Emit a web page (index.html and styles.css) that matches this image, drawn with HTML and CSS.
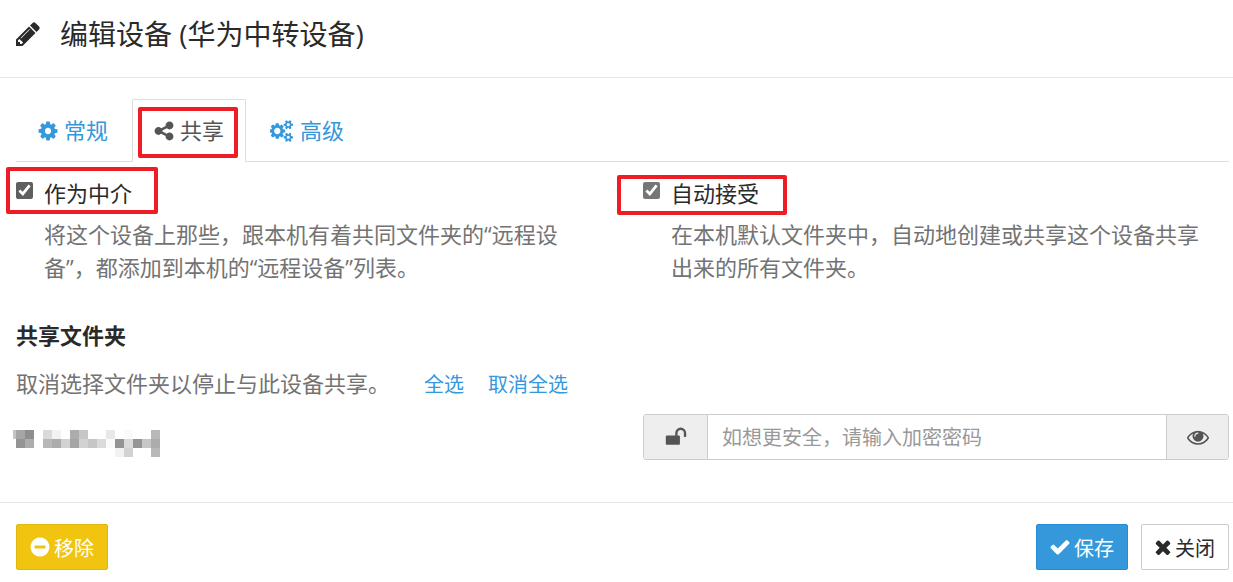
FILE: index.html
```html
<!doctype html>
<html lang="zh-CN">
<head>
<meta charset="utf-8">
<title>编辑设备</title>
<link rel="stylesheet" href="styles.css">
</head>

<body>
<form class="modal">
	<div class="modal-header">
		<svg class="icon-pencil" viewBox="128 0 1536 1792"><path d="M491 1536l91-91-235-235-91 91v107h128v128h107zm523-928q0-22-22-22-10 0-17 7l-542 542q-7 7-7 17 0 22 22 22 10 0 17-7l542-542q7-7 7-17zm-54-192l416 416-832 832h-416v-416zm683 96q0 53-37 90l-166 166-416-416 166-165q36-38 90-38 53 0 91 38l235 234q37 39 37 91z"/></svg>
		<h4 class="modal-title">编辑设备 (华为中转设备)</h4>
	</div>

	<div class="modal-body">
		<ul class="tabs">
			<li><a href="#general">
				<svg class="icon" viewBox="128 0 1536 1792"><path d="M1152 896q0-106-75-181t-181-75-181 75-75 181 75 181 181 75 181-75 75-181zm512-109v222q0 12-8 23t-20 13l-185 28q-19 54-39 91 35 50 107 138 10 12 10 25t-9 23q-27 37-99 108t-94 71q-12 0-26-9l-138-108q-44 23-91 38-16 136-29 186-7 28-36 28h-222q-14 0-24.5-8.5t-11.5-21.5l-28-184q-49-16-90-37l-141 107q-10 9-25 9-14 0-25-11-126-114-165-168-7-10-7-23 0-12 8-23 15-21 51-66.5t54-70.5q-27-50-41-99l-183-27q-13-2-21-12.5t-8-23.5v-222q0-12 8-23t19-13l186-28q14-46 39-92-40-57-107-138-10-12-10-24 0-10 9-23 26-36 98.5-107.5t94.5-71.5q13 0 26 10l138 107q44-23 91-38 16-136 29-186 7-28 36-28h222q14 0 24.5 8.5t11.5 21.5l28 184q49 16 90 37l142-107q9-9 24-9 13 0 25 10 129 119 165 170 7 8 7 22 0 12-8 23-15 21-51 66.5t-54 70.5q26 50 41 98l183 28q13 2 21 12.5t8 23.5z"/></svg>
				<span>常规</span>
			</a></li>
			<li class="active"><a href="#sharing">
				<svg class="icon" viewBox="128 0 1536 1792"><path d="M1344 1024q133 0 226.500 93.500t93.500 226.500-93.500 226.500-226.500 93.500-226.500-93.500-93.500-226.500q0-12 2-34l-360-180q-92 86-218 86-133 0-226.500-93.500t-93.500-226.500 93.500-226.500 226.500-93.500q126 0 218 86l360-180q-2-22-2-34 0-133 93.500-226.500t226.500-93.500 226.500 93.500 93.500 226.500-93.500 226.500-226.500 93.500q-126 0-218-86l-360 180q2 22 2 34t-2 34l360 180q92-86 218-86z"/></svg>
				<span>共享</span>
			</a><i class="mark mark-tab"></i></li>
			<li><a href="#advanced">
				<svg class="icon icon-cogs" viewBox="0 0 1920 1792"><path d="M832 896q0-106-75-181t-181-75-181 75-75 181 75 181 181 75 181-75 75-181zm384-91v185q0 10-7 19.500t-16 10.500l-155 24q-11 35-32 76 34 48 90 115 7 11 7 20 0 12-7 19-23 30-82.500 89.500t-78.500 59.500q-11 0-21-7l-115-90q-37 19-77 31-11 108-23 155-7 24-30 24h-186q-11 0-20-7.500t-10-17.500l-23-153q-34-10-75-31l-118 89q-7 7-20 7-11 0-21-8-144-133-144-160 0-9 7-19 10-14 41-53t47-61q-23-44-35-82l-152-24q-10-1-17-9.500t-7-19.500v-185q0-10 7-19.500t16-10.500l155-24q11-35 32-76-34-48-90-115-7-11-7-20 0-12 7-20 22-30 82-89t79-59q11 0 21 7l115 90q34-18 77-32 11-108 23-154 7-24 30-24h186q11 0 20 7.500t10 17.500l23 153q34 10 75 31l118-89q8-7 20-7 11 0 21 8 144 133 144 160 0 8-7 19-12 16-42 54t-45 60q23 48 34 82l152 23q10 2 17 10.500t7 19.500z"/><path id="smallCog" d="M1600 1408q0-52-38-90t-90-38-90 38-38 90q0 53 37.500 90.500t90.500 37.500 90.500-37.500 37.500-90.500zm256-70v140q0 16-149 31-12 27-30 52 51 113 51 138 0 4-4 7-122 71-124 71-8 0-46-47t-52-68q-20 2-30 2t-30-2q-14 21-52 68t-46 47q-2 0-124-71-4-3-4-7 0-25 51-138-18-25-30-52-149-15-149-31v-140q0-16 149-31 13-29 30-52-51-113-51-138 0-4 4-7 4-2 35-20t59-34 30-16q8 0 46 46.500t52 67.500q20-2 30-2t30 2q51-71 92-112l6-2q4 0 124 70 4 3 4 7 0 25-51 138 17 23 30 52 149 15 149 31z"/><use href="#smallCog" y="-1024"/></svg>
				<span>高级</span>
			</a></li>
		</ul>

		<div class="row options">
			<div class="option">
				<input type="checkbox" id="introducer" class="check-dark" checked>
				<label for="introducer">作为中介</label>
				<p>将这个设备上那些，跟本机有着共同文件夹的“远程设备”，都添加到本机的“远程设备”列表。</p>
				<i class="mark mark-introducer"></i>
			</div>
			<div class="option">
				<input type="checkbox" id="autoAccept" checked>
				<label for="autoAccept">自动接受</label>
				<p>在本机默认文件夹中，自动地创建或共享这个设备共享出来的所有文件夹。</p>
				<i class="mark mark-accept"></i>
			</div>
		</div>

		<h5 class="folders-title">共享文件夹</h5>
		<div class="folders-help">
			<span>取消选择文件夹以停止与此设备共享。</span>
			<a href="#all">全选</a>
			<a href="#none">取消全选</a>
		</div>

		<div class="row folder">
			<!-- pixelated folder name -->
			<svg class="mosaic" viewBox="0 0 147 27" shape-rendering="crispEdges">
				<path fill="#c4c4c4" d="M0 0h3v9h-3z"/>
				<path fill="#a5a5a5" d="M3 0h9v9h-9zM57 9h9v9h-9z"/>
				<path fill="#8e8e8e" d="M12 0h9v9h-9z"/>
				<path fill="#949494" d="M3 9h9v9h-9zM102 9h9v9h-9zM120 9h9v9h-9z"/>
				<path fill="#acacac" d="M12 9h9v9h-9zM39 9h9v9h-9zM57 0h9v9h-9zM138 9h9v9h-9z"/>
				<path fill="#dadada" d="M30 0h9v9h-9zM84 9h9v9h-9zM111 9h9v9h-9z"/>
				<path fill="#f2f2f2" d="M39 0h9v9h-9zM102 18h9v9h-9z"/>
				<path fill="#b8b8b8" d="M30 9h9v9h-9zM138 0h9v9h-9zM138 18h9v9h-9z"/>
				<path fill="#d2d2d2" d="M48 9h9v9h-9zM66 9h9v9h-9zM111 18h9v9h-9z"/>
				<path fill="#c6c6c6" d="M66 0h9v9h-9zM75 9h9v9h-9zM129 9h9v9h-9z"/>
				<path fill="#e8e8e8" d="M93 0h9v9h-9z"/>
				<path fill="#fafafa" d="M93 9h9v9h-9zM111 0h9v9h-9z"/>
			</svg>
			<div class="input-group">
				<span class="addon addon-lock"><svg class="icon icon-wide" viewBox="0 0 1792 1792"><path d="M1728 576v256q0 26-19 45t-45 19h-64q-26 0-45-19t-19-45v-256q0-106-75-181t-181-75-181 75-75 181v192h96q40 0 68 28t28 68v576q0 40-28 68t-68 28h-960q-40 0-68-28t-28-68v-576q0-40 28-68t68-28h672v-192q0-185 131.500-316.500t316.500-131.500 316.500 131.500 131.500 316.500z"/></svg></span>
				<input type="text" aria-label="加密密码" placeholder="如想更安全，请输入加密密码">
				<button type="button" class="addon" aria-label="显示密码"><svg class="icon icon-wide" viewBox="0 0 1792 1792"><path d="M1664 960q-152-236-381-353 61 104 61 225 0 185-131.500 316.500t-316.500 131.500-316.500-131.500-131.500-316.500q0-121 61-225-229 117-381 353 133 205 333.500 326.500t434.500 121.500 434.500-121.500 333.500-326.500zm-720-384q0-20-14-34t-34-14q-125 0-214.500 89.500t-89.500 214.500q0 20 14 34t34 14 34-14 14-34q0-86 61-147t147-61q20 0 34-14t14-34zm848 384q0 34-20 69-140 230-376.500 368.500t-499.500 138.500-499.500-139-376.500-368q-20-35-20-69t20-69q140-229 376.500-368t499.500-139 499.500 139 376.500 368q20 35 20 69z"/></svg></button>
			</div>
		</div>
	</div>

	<div class="modal-footer">
		<button type="button" class="btn btn-warning">
			<svg class="icon" viewBox="128 0 1536 1792"><path d="M1344 960v-128q0-26-19-45t-45-19h-768q-26 0-45 19t-19 45v128q0 26 19 45t45 19h768q26 0 45-19t19-45zm320-64q0 209-103 385.500t-279.500 279.500-385.500 103-385.500-103-279.500-279.500-103-385.500 103-385.500 279.500-279.500 385.500-103 385.500 103 279.500 279.500 103 385.500z"/></svg>
			<span>移除</span>
		</button>
		<button type="button" class="btn btn-primary">
			<svg class="icon" viewBox="128 0 1536 1792"><path d="M1671 566q0 40-28 68l-724 724-136 136q-28 28-68 28t-68-28l-136-136-362-362q-28-28-28-68t28-68l136-136q28-28 68-28t68 28l294 295 656-657q28-28 68-28t68 28l136 136q28 28 28 68z"/></svg>
			<span>保存</span>
		</button>
		<button type="button" class="btn btn-default">
			<svg class="icon icon-times" viewBox="256 0 1280 1792"><path d="M1490 1322q0 40-28 68l-136 136q-28 28-68 28t-68-28l-294-294-294 294q-28 28-68 28t-68-28l-136-136q-28-28-28-68t28-68l294-294-294-294q-28-28-28-68t28-68l136-136q28-28 68-28t68 28l294 294 294-294q28-28 68-28t68 28l136 136q28 28 28 68t-28 68l-294 294 294 294q28 28 28 68z"/></svg>
			<span>关闭</span>
		</button>
	</div>
</form>
</body>
</html>
```
FILE: styles.css
```css
* { box-sizing: border-box; padding: 0; margin: 0; }
body { background: #fff; color: #2a2a2a; font: 22px/33px "Open Sans", "Noto Sans CJK SC", sans-serif; }
li { list-style: none; }
a { color: #3498db; text-decoration: none; }
button, input { font-family: inherit; color: inherit; }
button { cursor: pointer; }
svg { display: block; flex: none; fill: currentColor; }
.icon { width: 20px; height: 22px; }
.icon-cogs { width: 24px; }
.icon-wide { width: 22px; }
.icon-times { width: 16px; }

.modal-header { display: flex; align-items: center; gap: 20px; padding: 15px 16px 24px; border-bottom: 1px solid #e5e5e5; }
.icon-pencil { width: 24px; height: 28px; }
.modal-title { font-size: 28px; line-height: 38px; font-weight: normal; }
.modal-body { padding: 21px 4px 0 16px; }

.tabs { display: flex; gap: 2px; border-bottom: 1px solid #ddd; }
.tabs li { position: relative; margin-bottom: -1px; }
.tabs a { display: flex; align-items: center; gap: 6px; padding: 15px 21px; border: 1px solid transparent; border-radius: 2px 2px 0 0; line-height: 31px; }
.tabs .active a { color: #555; background: #fff; border-color: #ddd; border-bottom-color: #fff; }

.row { display: grid; grid-template-columns: 1fr 1fr; gap: 41px; }
.options { margin-top: 15px; }
.option { display: grid; grid-template-columns: 28px 1fr; row-gap: 8px; position: relative; }
.option input { width: 17px; height: 17px; margin-top: 5px; accent-color: #767676; }
.option .check-dark { accent-color: #5f5f5f; }
.option p { grid-column: 2; padding-right: 12px; color: #737373; }

/* red annotation frames */
.mark { position: absolute; border: 4px solid #ee1c25; border-radius: 2px; pointer-events: none; }
.mark-tab { top: 8px; left: 6px; right: 8px; bottom: 4px; }
.mark-introducer { top: -10px; left: -10px; width: 152px; height: 47px; }
.mark-accept { top: -2px; left: -26px; width: 170px; height: 40px; }

.folders-title { margin-top: 35px; font-size: 22px; font-weight: bold; }
.folders-help { display: flex; align-items: baseline; margin-top: 15px; color: #737373; }
.folders-help a { margin-left: 24px; font-size: 20px; }
.folders-help span { margin-right: 10px; }

.folder { align-items: center; margin-top: 13px; }
.mosaic { width: 147px; height: 27px; margin-left: -3px; margin-top: 12px; }
.input-group { display: flex; height: 46px; border: 1px solid #ccc; border-radius: 3px; overflow: hidden; }
.input-group input { flex: 1; min-width: 0; padding: 0 14px; border: 0; outline: 0; font-size: 20px; }
.input-group input::placeholder { color: #999; }
.addon { display: flex; align-items: center; justify-content: center; width: 62px; background: #eee; color: #555; border: 0 solid #ccc; border-left-width: 1px; }
.addon-lock { width: 64px; border-width: 0 1px 0 0; }

.modal-footer { display: flex; margin-top: 42px; padding: 21px 4px 12px 16px; border-top: 1px solid #e5e5e5; }
.btn { display: flex; align-items: center; gap: 4px; height: 46px; padding: 0 13px; border: 1px solid #ccc; border-radius: 2px; background: #fff; font-size: 20px; }
.btn-warning { margin-right: auto; background: #f1c40f; border-color: #e0b70e; color: #fff; }
.btn-primary { margin-right: 13px; background: #3498db; border-color: #258cd1; color: #fff; }
```
